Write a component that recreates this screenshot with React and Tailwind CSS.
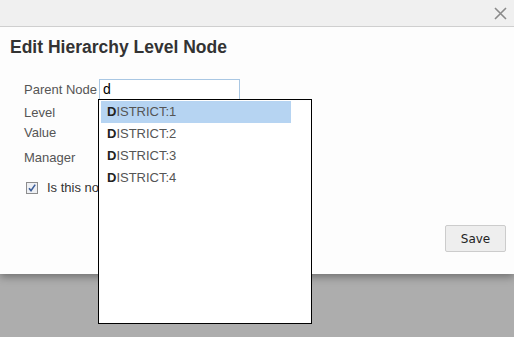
const font = { fontFamily: '"Liberation Sans", Arial, sans-serif' };

const CloseIcon = () => (
  <svg width="13" height="13" viewBox="0 0 13 13" className="block">
    <path d="M1 1 L12 12 M12 1 L1 12" stroke="#8a8a8a" strokeWidth="1.6" />
  </svg>
);

const CheckBox = () => (
  <svg width="12" height="12" viewBox="0 0 12 12" className="block shrink-0">
    <rect x="0.5" y="0.5" width="11" height="11" fill="#eef0f4" stroke="#8d8d8d" />
    <path d="M3 6.2 L5 8.6 L9.2 2.6" fill="none" stroke="#3d5f9a" strokeWidth="1.6" />
  </svg>
);

const App = () => {
  const options = ["DISTRICT:1", "DISTRICT:2", "DISTRICT:3", "DISTRICT:4"];

  return (
    <div className="relative w-[514px] h-[337px] flex flex-col bg-[#adadad] overflow-hidden" style={font}>
      {/* modal */}
      <div className="h-[274px] flex flex-col bg-[#fdfdfd] shadow-[0_3px_8px_rgba(0,0,0,0.35)] z-10">
        <div className="h-[27px] shrink-0 flex items-center justify-end pr-[7px] bg-[#f0f0f0] border-b border-[#cfcfcf]">
          <CloseIcon />
        </div>
        <div className="flex-1 flex flex-col">
          <div className="h-[40px] flex items-center pl-[10px] text-[17.5px] font-bold text-[#333]">
            Edit Hierarchy Level Node
          </div>
          <div className="pl-[24px] text-[13px] text-[#555]">
            <div className="mt-[12px] h-[21px] flex items-center">
              <span className="w-[75px]">Parent Node</span>
              <div className="w-[141px] h-[21px] border border-[#a9c7e3] bg-white flex items-center pl-[3px] text-[14px] text-black">
                d
              </div>
            </div>
            <div className="h-[25px] flex items-center">Level</div>
            <div className="h-[15px] flex items-center">Value</div>
            <div className="h-[36px] flex items-center">Manager</div>
            <div className="h-[24px] flex items-center gap-[9px] pl-[2px] text-[#333]">
              <CheckBox />
              <span className="w-[51px] overflow-hidden whitespace-nowrap">Is this node a leaf node?</span>
            </div>
          </div>
          <div className="flex justify-end pr-[8px] mt-[25px]">
            <button className="w-[61px] h-[27px] bg-[#eeeeee] border border-[#cccccc] rounded-[2px] text-[12px] text-[#222]" style={{ fontFamily: '"DejaVu Sans", sans-serif' }}>
              Save
            </button>
          </div>
        </div>
      </div>
      <div className="flex-1" />

      {/* autocomplete menu */}
      <div className="absolute left-[98px] top-[99px] w-[214px] h-[225px] bg-white border border-black pt-[1px] pl-[2px] z-20">
        {options.map((item, i) => (
          <div
            key={item}
            className={
              "w-[190px] h-[22px] flex items-center pl-[6px] text-[13px] text-[#555] " +
              (i === 0 ? "bg-[#b6d4f2]" : "")
            }
          >
            <b className="text-[#222]">{item[0]}</b>
            {item.slice(1)}
          </div>
        ))}
      </div>
    </div>
  );
};

export default App;
